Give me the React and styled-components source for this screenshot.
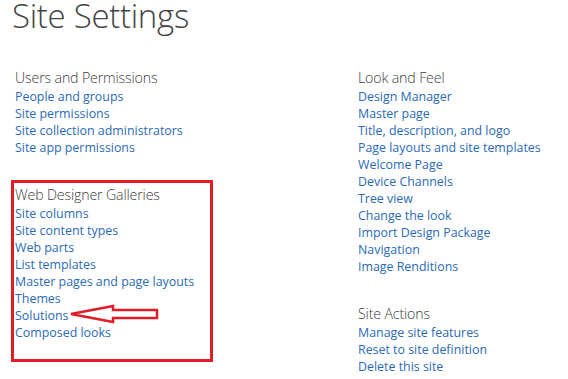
import React from "react";
import styled, { createGlobalStyle } from "styled-components";

const Global = createGlobalStyle`
  html, body { margin: 0; padding: 0; background: #fff; }
  body { font-family: "Open Sans", "Noto Sans", sans-serif; }
`;

const Page = styled.div`
  width: 568px;
  height: 379px;
  overflow: hidden;
  padding-left: 15px;
  box-sizing: border-box;
`;

const Title = styled.h1`
  margin: 0 0 0 -3px;
  font-size: 33px;
  line-height: 32px;
  font-weight: 300;
  color: #444;
  letter-spacing: -0.3px;
`;

const Columns = styled.div`
  display: grid;
  grid-template-columns: 343px 1fr;
  margin-top: 35px;
`;

const Column = styled.div`
  display: flex;
  flex-direction: column;
  align-items: flex-start;
`;

const Section = styled.section`
  display: flex;
  flex-direction: column;
  align-items: flex-start;
  & + & { margin-top: 28px; }
`;

const Highlight = styled.div`
  position: relative;
  margin: 24px 0 0 -4px;
  width: 202px;
  height: 182px;
  box-sizing: border-box;
  border: 3px solid #e21c26;
  padding: 1px 0 0 1px;
`;

const Heading = styled.h2`
  margin: 0;
  font-size: 14.2px;
  line-height: 21px;
  font-weight: 300;
  color: #3c3c3c;
  letter-spacing: -0.15px;
`;

const Link = styled.a`
  display: block;
  font-size: 12.4px;
  line-height: 17px;
  color: #2a6ab4;
  text-decoration: none;
  white-space: nowrap;
`;

const Arrow = styled.svg`
  position: absolute;
  left: 56px;
  top: 121px;
  overflow: visible;
`;

const Group = ({ title, links }) => (
  <>
    <Heading>{title}</Heading>
    {links.map((l) => (
      <Link key={l} href="#">{l}</Link>
    ))}
  </>
);

export default function App() {
  return (
    <Page>
      <Global />
      <Title>Site Settings</Title>
      <Columns>
        <Column>
          <Section>
            <Group
              title="Users and Permissions"
              links={["People and groups", "Site permissions", "Site collection administrators", "Site app permissions"]}
            />
          </Section>
          <Highlight>
            <Group
              title="Web Designer Galleries"
              links={["Site columns", "Site content types", "Web parts", "List templates", "Master pages and page layouts", "Themes", "Solutions", "Composed looks"]}
            />
            <Arrow width="90" height="20" viewBox="0 0 90 20">
              <polygon
                points="1,10 43,2 43,6 87,6 87,14 43,14 43,18"
                fill="#fff"
                stroke="#e21c26"
                strokeWidth="2.5"
                strokeLinejoin="miter"
              />
            </Arrow>
          </Highlight>
        </Column>
        <Column>
          <Section>
            <Group
              title="Look and Feel"
              links={["Design Manager", "Master page", "Title, description, and logo", "Page layouts and site templates", "Welcome Page", "Device Channels", "Tree view", "Change the look", "Import Design Package", "Navigation", "Image Renditions"]}
            />
          </Section>
          <Section>
            <Group
              title="Site Actions"
              links={["Manage site features", "Reset to site definition", "Delete this site"]}
            />
          </Section>
        </Column>
      </Columns>
    </Page>
  );
}
